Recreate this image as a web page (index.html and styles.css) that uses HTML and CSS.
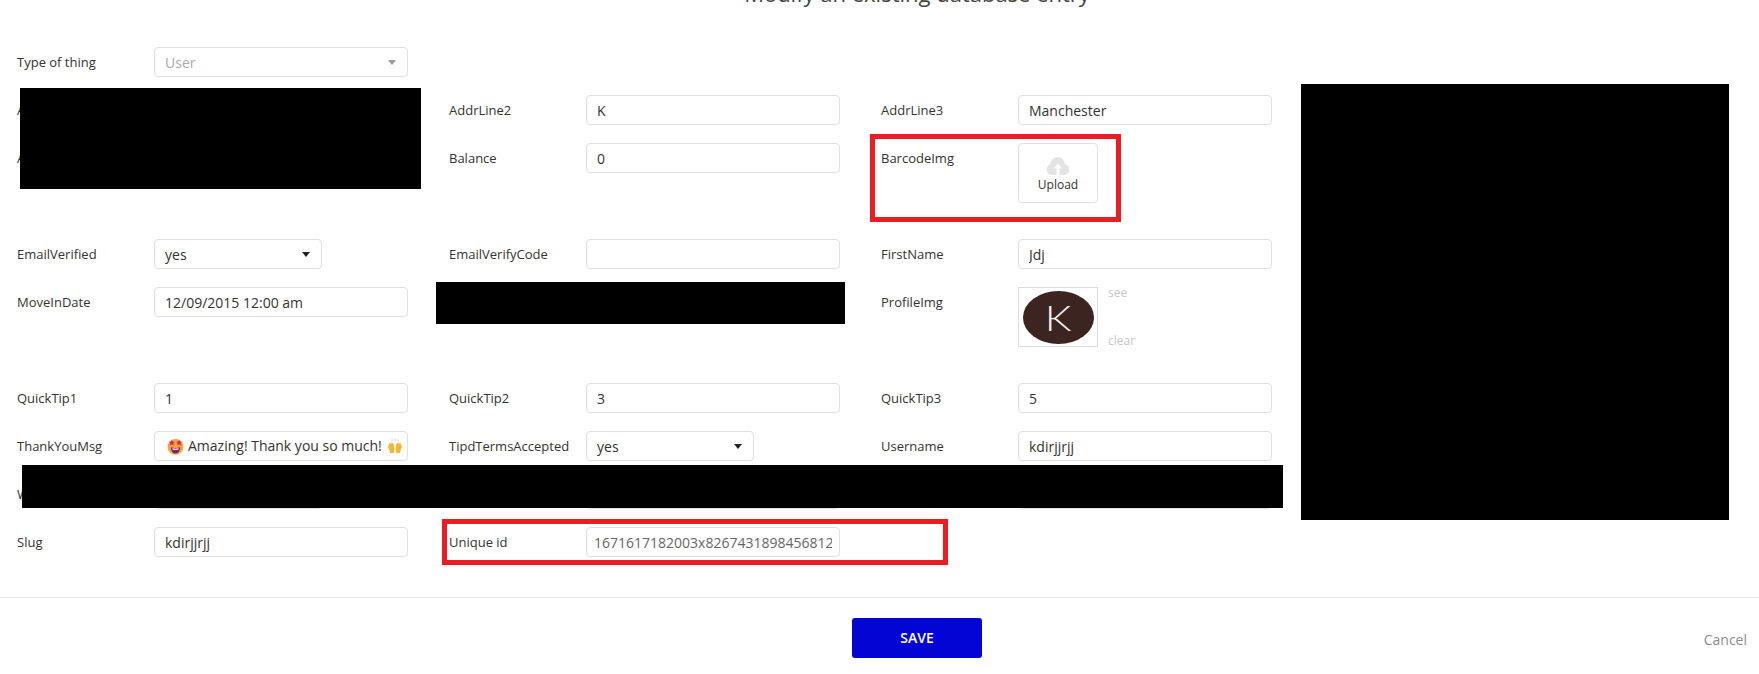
FILE: index.html
```html
<!DOCTYPE html>
<html lang="en">
<head>
<meta charset="utf-8">
<title>Modify an existing database entry</title>
<link rel="stylesheet" href="styles.css">
</head>
<body>
<main class="page">
  <h1 class="title">Modify an existing database entry</h1>
  <form class="form">
    <div class="cell cell-full"><span class="label">Type of thing</span><div class="select select-wide select-disabled">User<i class="caret"></i></div></div>

    <div class="cell"><span class="label">A</span><input class="input"></div>
    <div class="cell"><span class="label">AddrLine2</span><input class="input" value="K"></div>
    <div class="cell"><span class="label">AddrLine3</span><input class="input" value="Manchester"></div>

    <div class="cell"><span class="label">A</span><input class="input"></div>
    <div class="cell"><span class="label">Balance</span><input class="input" value="0"></div>
    <div class="cell cell-tall"><span class="label">BarcodeImg</span>
      <div class="upload">
        <svg class="upload-icon" viewBox="0 0 24 18" aria-hidden="true"><path class="cloud" d="M5.500 18A5.500 5.500 0 0 1 4.400 7.400 7.200 7.200 0 0 1 18.800 7 5.600 5.600 0 0 1 18.500 18z"/><path class="cloud-arrow" d="M12 6.500 7.800 11.200h2.700V18h3v-6.800h2.700z"/></svg>
        <span class="upload-text">Upload</span>
      </div>
    </div>

    <div class="cell"><span class="label">EmailVerified</span><div class="select">yes<i class="caret"></i></div></div>
    <div class="cell"><span class="label">EmailVerifyCode</span><input class="input"></div>
    <div class="cell"><span class="label">FirstName</span><input class="input" value="Jdj"></div>

    <div class="cell"><span class="label">MoveInDate</span><input class="input" value="12/09/2015 12:00 am"></div>
    <div class="cell"><span class="label"></span><input class="input"></div>
    <div class="cell cell-tall"><span class="label">ProfileImg</span>
      <div class="thumb"><div class="avatar"><span class="avatar-letter">K</span></div></div>
      <div class="thumb-actions"><span>see</span><span>clear</span></div>
    </div>

    <div class="cell"><span class="label">QuickTip1</span><input class="input" value="1"></div>
    <div class="cell"><span class="label">QuickTip2</span><input class="input" value="3"></div>
    <div class="cell"><span class="label">QuickTip3</span><input class="input" value="5"></div>

    <div class="cell"><span class="label">ThankYouMsg</span>
      <div class="field-rich">
        <svg class="emoji" viewBox="0 0 16 16" aria-hidden="true">
          <circle cx="8" cy="8.400" r="7.400" fill="#f5a43a"/>
          <path d="M3.600 8.600C3.800 13 6 14.600 8 14.600s4.200-1.600 4.400-6C10 9.600 6 9.600 3.600 8.600z" fill="#7b2a5e"/>
          <path d="M5 9.700c2 .5 4 .5 6 0l-.2 1.200c-1.800.4-3.800.4-5.600 0z" fill="#fff"/>
          <path d="M4.600 1.800 5.500 3.400 7.300 3.700 6 5.100 6.300 7 4.600 6.100 2.900 7 3.200 5.100 1.900 3.700 3.700 3.400z" fill="#e0245e"/>
          <path d="M11.400 1.800 12.300 3.400 14.100 3.700 12.800 5.100 13.100 7 11.400 6.100 9.700 7 10 5.100 8.700 3.700 10.500 3.400z" fill="#e0245e"/>
        </svg>
        <span class="rich-text">Amazing! Thank you so much!</span>
        <svg class="emoji-hands" viewBox="0 0 16 14" aria-hidden="true">
          <path d="M1 7.500 3 3.500 4 5 5 3.300 6.800 5.500 7.400 9.500 6.800 14H3L2.500 11.500z" fill="#f7b733"/>
          <path d="M15 7.500 13 3.500 12 5 11 3.300 9.200 5.500 8.600 9.500 9.200 14H13L13.500 11.500z" fill="#f7b733"/>
          <path d="M5 .3v1.500M8 0v1.500M11 .3v1.500" stroke="#9fb4c4" stroke-width=".7"/>
        </svg>
      </div>
    </div>
    <div class="cell"><span class="label">TipdTermsAccepted</span><div class="select">yes<i class="caret"></i></div></div>
    <div class="cell"><span class="label">Username</span><input class="input" value="kdirjjrjj"></div>

    <div class="cell"><span class="label">W</span><div class="select">&nbsp;</div></div>
    <div class="cell"><span class="label"></span><input class="input"></div>
    <div class="cell"><span class="label"></span><input class="input"></div>

    <div class="cell"><span class="label">Slug</span><input class="input" value="kdirjjrjj"></div>
    <div class="cell"><span class="label">Unique id</span><input class="input input-id" value="1671617182003x8267431898456812"></div>
  </form>
  <footer class="footer">
    <button type="button" class="save">SAVE</button>
    <span class="cancel">Cancel</span>
  </footer>

  <div class="redact redact-a"></div>
  <div class="redact redact-b"></div>
  <div class="redact redact-c"></div>
  <div class="redact redact-d"></div>
  <div class="mark mark-barcode"></div>
  <div class="mark mark-id"></div>
</main>
</body>
</html>
```

FILE: styles.css
```css
* { box-sizing: border-box; }
html, body { margin: 0; height: 100%; overflow: hidden; background: #fff; }
body { font-family: "Open Sans", "Liberation Sans", sans-serif; color: #333; font-size: 13px; }
.page { position: relative; height: 674px; overflow: hidden; }

.title {
  margin: -22px 0 0;
  padding-left: 75px;
  font-size: 22px;
  line-height: 30px;
  font-weight: 400;
  color: #444;
  text-align: center;
}

.form {
  display: grid;
  grid-template-columns: repeat(3, 432px);
  row-gap: 18px;
  padding: 39px 0 40px 17px;
}
.cell { display: flex; align-items: flex-start; height: 30px; }
.cell-full { grid-column: 1 / -1; }
.cell-tall { height: 78px; }
.label { flex: 0 0 137px; line-height: 30px; font-size: 13px; color: #333; white-space: nowrap; }

.input, .select, .field-rich {
  width: 254px;
  height: 30px;
  border: 1px solid #e0e0e0;
  border-radius: 4px;
  background: #fff;
  color: #333;
  font: 14px/28px "Open Sans", "Liberation Sans", sans-serif;
  padding: 0 10px;
  outline: none;
}
.input-id { padding: 0 7px; color: #666; }

.select { position: relative; width: 168px; line-height: 30px; }
.select-wide { width: 254px; }
.select-disabled { color: #aaa; }
.caret {
  position: absolute;
  right: 11px;
  top: 12px;
  border-left: 4px solid transparent;
  border-right: 4px solid transparent;
  border-top: 5px solid #222;
}
.select-disabled .caret { border-top-color: #999; }

.field-rich { display: flex; align-items: center; padding: 0 0 0 12px; white-space: nowrap; overflow: hidden; }
.emoji { flex: none; width: 17px; height: 17px; margin-right: 4px; }
.rich-text { flex: none; width: 194px; }
.emoji-hands { flex: none; width: 16px; height: 14px; margin-left: 5px; }

.upload {
  width: 80px;
  height: 60px;
  border: 1px solid #e0e0e0;
  border-radius: 4px;
  display: flex;
  flex-direction: column;
  align-items: center;
  padding-top: 13px;
}
.upload-icon { width: 24px; height: 18px; }
.cloud { fill: #e3e3e3; }
.cloud-arrow { fill: #fff; }
.upload-text { font-size: 12px; line-height: 16px; margin-top: 2px; color: #333; }

.thumb {
  width: 80px;
  height: 60px;
  border: 1px solid #ddd;
  display: flex;
  align-items: center;
  justify-content: center;
}
.avatar {
  width: 71px;
  height: 53px;
  border-radius: 50%;
  background: #3c2420;
  display: flex;
  align-items: center;
  justify-content: center;
}
.avatar-letter {
  font-family: Lato, "Open Sans", sans-serif;
  font-weight: 300;
  font-size: 35px;
  line-height: 1;
  color: #f2f2f2;
  transform: scaleX(1.2);
}
.thumb-actions {
  height: 60px;
  margin-left: 10px;
  display: flex;
  flex-direction: column;
  justify-content: space-between;
  font-size: 12px;
  line-height: 12px;
  color: #c6c6c6;
}

.footer {
  display: flex;
  align-items: center;
  height: 80px;
  border-top: 1px solid #e8e8e8;
  padding: 0 12px 0 852px;
}
.save {
  width: 130px;
  height: 40px;
  border: 0;
  border-radius: 3px;
  background: #0205d3;
  color: #fff;
  font: 600 14px "Open Sans", "Liberation Sans", sans-serif;
}
.cancel { margin-left: auto; margin-top: 4px; font-size: 14px; color: #8c8c8c; }

.redact { position: absolute; background: #000; }
.redact-a { left: 20px; top: 88px; width: 401px; height: 101px; }
.redact-b { left: 436px; top: 282px; width: 409px; height: 42px; }
.redact-c { left: 1301px; top: 84px; width: 428px; height: 436px; }
.redact-d { left: 22px; top: 465px; width: 1261px; height: 43px; }

.mark { position: absolute; border: 5px solid #ed1c24; }
.mark-barcode { left: 870px; top: 134px; width: 251px; height: 88px; }
.mark-id { left: 442px; top: 519px; width: 506px; height: 46px; }
```
